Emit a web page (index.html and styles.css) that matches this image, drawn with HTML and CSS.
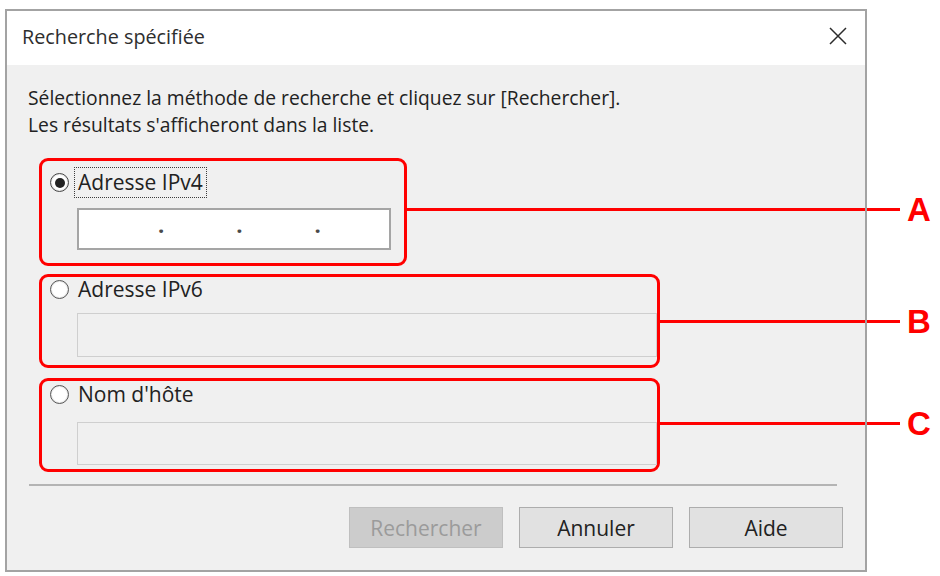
FILE: index.html
```html
<!DOCTYPE html>
<html lang="fr">
<head>
<meta charset="utf-8">
<title>Recherche spécifiée</title>
<link rel="stylesheet" href="styles.css">
</head>
<body>
<div class="window">
  <div class="titlebar">
    <span class="title">Recherche spécifiée</span>
    <svg class="close" width="18" height="18" viewBox="0 0 18 18" aria-label="Fermer"><path d="M1 1L17 17M17 1L1 17" stroke="#2b2b2b" stroke-width="1.5" fill="none"/></svg>
  </div>
  <div class="content">
    <p class="intro">Sélectionnez la méthode de recherche et cliquez sur [Rechercher].<br>Les résultats s'afficheront dans la liste.</p>

    <div class="group group-a">
      <div class="option"><span class="radio checked"></span><span class="label focused">Adresse IPv4</span></div>
      <div class="field field-ip"><span class="dot">.</span><span class="dot">.</span><span class="dot">.</span></div>
      <div class="callout"><span class="leader"></span><span class="letter">A</span></div>
    </div>

    <div class="group group-b">
      <div class="option"><span class="radio"></span><span class="label">Adresse IPv6</span></div>
      <div class="field field-off"></div>
      <div class="callout"><span class="leader"></span><span class="letter">B</span></div>
    </div>

    <div class="group group-c">
      <div class="option"><span class="radio"></span><span class="label">Nom d'hôte</span></div>
      <div class="field field-off"></div>
      <div class="callout"><span class="leader"></span><span class="letter">C</span></div>
    </div>

    <div class="separator"></div>

    <div class="buttons">
      <button class="btn" disabled>Rechercher</button>
      <button class="btn">Annuler</button>
      <button class="btn">Aide</button>
    </div>
  </div>
</div>
</body>
</html>
```

FILE: styles.css
```css
* { box-sizing: border-box; }

html, body {
  margin: 0;
  background: #ffffff;
}

body {
  font-family: "Open Sans", "Segoe UI", sans-serif;
  color: #222222;
}

.window {
  position: relative;
  margin: 9px 0 0 5px;
  width: 862px;
  height: 563px;
  padding: 2px;
  background: #f0f0f0;
  display: flex;
  flex-direction: column;
}

.window::after {
  content: "";
  position: absolute;
  inset: 0;
  border: 2px solid #a3a3a3;
  pointer-events: none;
  z-index: 3;
}

.titlebar {
  height: 54px;
  background: #ffffff;
  display: flex;
  align-items: center;
  justify-content: space-between;
  padding: 0 18px 4px 15px;
}

.title {
  font-size: 19.8px;
  color: #2e2e2e;
}

.close { display: block; }

.content {
  flex: 1;
  padding: 19px 21px 0;
}

.intro {
  margin: 0;
  font-size: 19.3px;
  line-height: 27px;
}

.group {
  position: relative;
  margin-left: 11px;
  border: 3px solid #ff0000;
  border-radius: 9px;
  padding-left: 8px;
}

.group-a {
  margin-top: 20px;
  width: 368px;
  height: 108px;
  padding-top: 6px;
}

.group-b {
  margin-top: 8px;
  width: 621px;
  height: 94px;
}

.group-c {
  margin-top: 10px;
  width: 621px;
  height: 94px;
  padding-top: 1px;
}

.option {
  display: flex;
  align-items: center;
  height: 25px;
}

.group-a .option { height: 31px; }

.radio {
  flex: none;
  width: 19px;
  height: 19px;
  border-radius: 50%;
  border: 1px solid #555555;
  background: #ffffff;
  box-shadow: inset 0 0 0 1px #e8e8e8;
  display: flex;
  align-items: center;
  justify-content: center;
}

.radio.checked {
  border-color: #444444;
}

.radio.checked::before {
  content: "";
  width: 10px;
  height: 10px;
  border-radius: 50%;
  background: #222222;
}

.label {
  margin-left: 5px;
  padding: 2px 3px;
  border: 1px dotted transparent;
  font-size: 21px;
  line-height: 25px;
  white-space: nowrap;
}

.label.focused { border-color: #3c3c3c; }

.field {
  margin-left: 27px;
}

.field-ip {
  margin-top: 10px;
  width: 314px;
  height: 42px;
  background: #ffffff;
  border: 2px solid #a5a5a5;
  display: flex;
  align-items: flex-start;
  gap: 72px;
  padding-left: 79px;
}

.dot {
  font-size: 22px;
  font-weight: bold;
  line-height: 28px;
  color: #4a4a4a;
}

.field-off {
  background: #f0f0f0;
  border: 1px solid #cfcfcf;
}

.group-b .field-off {
  margin-top: 11px;
  height: 44px;
}

.group-c .field-off {
  margin-top: 15px;
  height: 43px;
}

.callout {
  position: absolute;
  left: 100%;
  height: 0;
  display: flex;
  align-items: center;
  z-index: 2;
}

.group-a .callout { top: 48.5px; }
.group-b .callout { top: 44.5px; }
.group-c .callout { top: 42.5px; }

.leader {
  height: 3px;
  background: #ff0000;
}

.group-a .leader { width: 496px; }
.group-b .leader,
.group-c .leader { width: 243px; }

.letter {
  margin-left: 7px;
  font-family: "Liberation Sans", Arial, sans-serif;
  font-weight: bold;
  font-size: 33px;
  line-height: 1;
  color: #ff0000;
}

.separator {
  margin: 12px 7px 0 1px;
  height: 2px;
  background: #b4b4b4;
}

.buttons {
  margin: 21px 1px 0 0;
  display: flex;
  justify-content: flex-end;
  gap: 16px;
}

.btn {
  width: 154px;
  height: 41px;
  padding: 0;
  font-family: "Open Sans", "Segoe UI", sans-serif;
  font-size: 21px;
  color: #222222;
  background: #e1e1e1;
  border: 1px solid #adadad;
  border-radius: 0;
}

.btn:disabled {
  background: #cccccc;
  border-color: #bfbfbf;
  color: #9b9b9b;
}
```
